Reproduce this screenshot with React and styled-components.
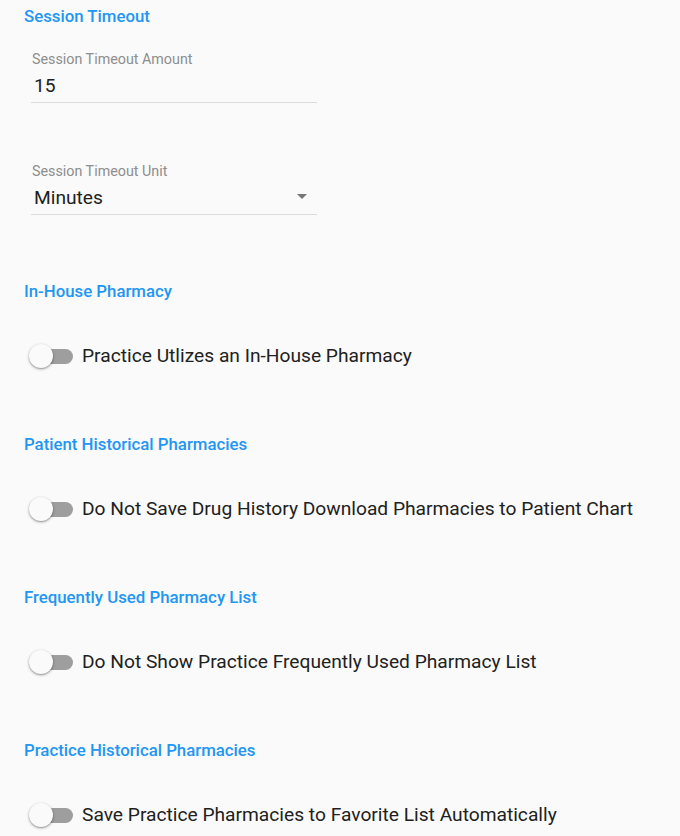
import React from 'react';
import styled, { createGlobalStyle } from 'styled-components';

const GlobalStyle = createGlobalStyle`
  body {
    margin: 0;
    background: #fafafa;
    font-family: Roboto, 'Liberation Sans', sans-serif;
  }
`;

const Page = styled.div`
  padding: 5px 24px 0 24px;
  display: flex;
  flex-direction: column;
`;

const Section = styled.div`
  display: flex;
  flex-direction: column;
  margin-bottom: ${(p) => p.gap || 0}px;
`;

const Heading = styled.div`
  color: #2196f3;
  font-size: 16.8px;
  font-weight: 500;
  line-height: 22px;
`;

const Field = styled.div`
  width: 286px;
  margin-left: 7px;
  margin-top: ${(p) => p.top}px;
  border-bottom: 1px solid #dcdcdc;
  position: relative;
`;

const Label = styled.div`
  color: #8e8e8e;
  font-size: 14.3px;
  line-height: 16px;
  padding-left: 1px;
`;

const Value = styled.div`
  color: #212121;
  font-size: 19.2px;
  line-height: 24px;
  padding: 7px 0 4px 3px;
`;

const Arrow = styled.span`
  position: absolute;
  right: 10px;
  bottom: 15px;
  width: 0;
  height: 0;
  border-left: 5px solid transparent;
  border-right: 5px solid transparent;
  border-top: 5px solid #757575;
`;

const SwitchRow = styled.div`
  display: flex;
  align-items: center;
  gap: 9px;
  margin-top: 42px;
  padding-left: 5px;
`;

const Track = styled.span`
  position: relative;
  width: 41px;
  height: 15px;
  border-radius: 8px;
  background: #9e9e9e;
  display: inline-block;
  margin-left: 3px;
`;

const Thumb = styled.span`
  position: absolute;
  left: -3px;
  top: -5px;
  width: 24px;
  height: 24px;
  border-radius: 50%;
  background: #fafafa;
  box-shadow: 0 1px 3px rgba(0, 0, 0, 0.35), 0 1px 1px rgba(0, 0, 0, 0.14);
`;

const SwitchLabel = styled.span`
  color: #212121;
  font-size: 19.2px;
  line-height: 24px;
`;

const Toggle = ({ label }) => (
  <SwitchRow>
    <Track>
      <Thumb />
    </Track>
    <SwitchLabel>{label}</SwitchLabel>
  </SwitchRow>
);

const switches = [
  ['In-House Pharmacy', 'Practice Utlizes an In-House Pharmacy'],
  ['Patient Historical Pharmacies', 'Do Not Save Drug History Download Pharmacies to Patient Chart'],
  ['Frequently Used Pharmacy List', 'Do Not Show Practice Frequently Used Pharmacy List'],
  ['Practice Historical Pharmacies', 'Save Practice Pharmacies to Favorite List Automatically'],
];

export default function App() {
  return (
    <>
      <GlobalStyle />
      <Page>
        <Section gap={65}>
          <Heading>Session Timeout</Heading>
          <Field top={24}>
            <Label>Session Timeout Amount</Label>
            <Value>15</Value>
          </Field>
          <Field top={60}>
            <Label>Session Timeout Unit</Label>
            <Value>Minutes</Value>
            <Arrow />
          </Field>
        </Section>
        {switches.map(([title, label]) => (
          <Section key={title} gap={65}>
            <Heading>{title}</Heading>
            <Toggle label={label} />
          </Section>
        ))}
      </Page>
    </>
  );
}
